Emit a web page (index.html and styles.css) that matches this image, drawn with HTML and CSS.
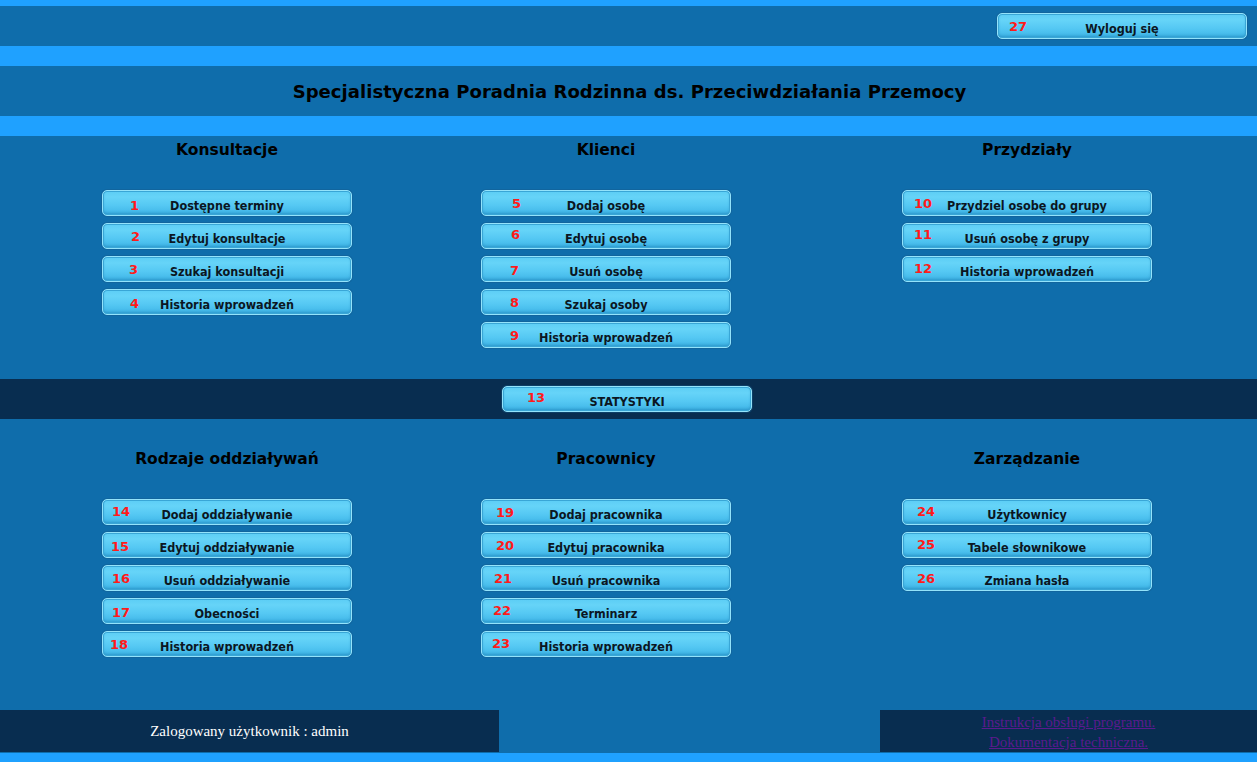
FILE: index.html
```html
<!DOCTYPE html>
<html lang="pl">
<head>
<meta charset="utf-8">
<title>Specjalistyczna Poradnia Rodzinna</title>
<link rel="stylesheet" href="styles.css">
</head>
<body>
<div class="stripe top"></div>
<div class="bar header">
  <a class="btn logout" href="#"><span class="n l12 t7">27</span>Wyloguj się</a>
</div>
<div class="stripe"></div>
<div class="bar title"><h1>Specjalistyczna Poradnia Rodzinna ds. Przeciwdziałania Przemocy</h1></div>
<div class="stripe"></div>

<div class="section s1">
  <div class="col">
    <h2>Konsultacje</h2>
    <div class="list">
      <a class="btn" href="#"><span class="n l28 t9">1</span>Dostępne terminy</a>
      <a class="btn" href="#"><span class="n l29 t7">2</span>Edytuj konsultacje</a>
      <a class="btn" href="#"><span class="n l27 t7">3</span>Szukaj konsultacji</a>
      <a class="btn" href="#"><span class="n l28 t8">4</span>Historia wprowadzeń</a>
    </div>
  </div>
  <div class="col c2">
    <h2>Klienci</h2>
    <div class="list">
      <a class="btn" href="#"><span class="n l31 t7">5</span>Dodaj osobę</a>
      <a class="btn" href="#"><span class="n l30 t5">6</span>Edytuj osobę</a>
      <a class="btn" href="#"><span class="n l29 t8">7</span>Usuń osobę</a>
      <a class="btn" href="#"><span class="n l29 t7">8</span>Szukaj osoby</a>
      <a class="btn" href="#"><span class="n l29 t7">9</span>Historia wprowadzeń</a>
    </div>
  </div>
  <div class="col c3">
    <h2>Przydziały</h2>
    <div class="list">
      <a class="btn" href="#"><span class="n l12 t7">10</span>Przydziel osobę do grupy</a>
      <a class="btn" href="#"><span class="n l12 t5">11</span>Usuń osobę z grupy</a>
      <a class="btn" href="#"><span class="n l12 t6">12</span>Historia wprowadzeń</a>
    </div>
  </div>
</div>

<div class="bar stats">
  <a class="btn" href="#"><span class="n l25 t5">13</span>STATYSTYKI</a>
</div>

<div class="section s2">
  <div class="col">
    <h2>Rodzaje oddziaływań</h2>
    <div class="list">
      <a class="btn" href="#"><span class="n l10 t6">14</span>Dodaj oddziaływanie</a>
      <a class="btn" href="#"><span class="n l9 t8">15</span>Edytuj oddziaływanie</a>
      <a class="btn" href="#"><span class="n l10 t7">16</span>Usuń oddziaływanie</a>
      <a class="btn" href="#"><span class="n l10 t8">17</span>Obecności</a>
      <a class="btn" href="#"><span class="n l8 t7">18</span>Historia wprowadzeń</a>
    </div>
  </div>
  <div class="col c2">
    <h2>Pracownicy</h2>
    <div class="list">
      <a class="btn" href="#"><span class="n l15 t7">19</span>Dodaj pracownika</a>
      <a class="btn" href="#"><span class="n l15 t7">20</span>Edytuj pracownika</a>
      <a class="btn" href="#"><span class="n l13 t7">21</span>Usuń pracownika</a>
      <a class="btn" href="#"><span class="n l12 t6">22</span>Terminarz</a>
      <a class="btn" href="#"><span class="n l11 t6">23</span>Historia wprowadzeń</a>
    </div>
  </div>
  <div class="col c3">
    <h2>Zarządzanie</h2>
    <div class="list">
      <a class="btn" href="#"><span class="n l15 t6">24</span>Użytkownicy</a>
      <a class="btn" href="#"><span class="n l15 t6">25</span>Tabele słownikowe</a>
      <a class="btn" href="#"><span class="n l15 t7">26</span>Zmiana hasła</a>
    </div>
  </div>
</div>

<div class="footer">
  <div class="fbox left">Zalogowany użytkownik : admin</div>
  <div class="fbox right">
    <a href="#">Instrukcja obsługi programu.</a>
    <a href="#">Dokumentacja techniczna.</a>
  </div>
</div>
<div class="stripe bottom"></div>
</body>
</html>
```
FILE: styles.css
```css
html, body {
  margin: 0;
  padding: 0;
}
body {
  background: #0f6dab;
  font-family: "DejaVu Sans", Verdana, sans-serif;
  color: #000;
  width: 1257px;
  height: 762px;
  overflow: hidden;
}
.stripe {
  height: 20px;
  background: #1fa1ff;
}
.stripe.top { height: 6px; }
.stripe.bottom { height: 9px; border-top: 1px solid #0f6dab; }

.bar { background: #0f6dab; }
.header {
  height: 40px;
  display: flex;
  justify-content: flex-end;
  align-items: flex-start;
  padding: 7px 10px 0 0;
  box-sizing: border-box;
}
.title {
  height: 50px;
  display: flex;
  align-items: center;
  justify-content: center;
}
.title h1 {
  margin: 0;
  font-size: 18px;
  font-weight: bold;
  letter-spacing: 0.05px;
  transform: translateX(1px);
}

.section {
  display: flex;
  padding-left: 102px;
  box-sizing: border-box;
}
.s1 { height: 243px; padding-top: 4px; }
.s2 { height: 291px; padding-top: 30px; }
.col { width: 250px; }
.col.c2 { margin-left: 129px; }
.col.c3 { margin-left: 171px; }
.col h2 {
  margin: 0 0 30px;
  font-size: 15.5px;
  line-height: 20px;
  text-align: center;
  font-weight: bold;
  white-space: nowrap;
}
.list {
  display: flex;
  flex-direction: column;
  gap: 7px;
}

.stats {
  height: 40px;
  background: #082d50;
  display: flex;
  padding: 7px 0 0 502px;
  box-sizing: border-box;
}

.btn {
  position: relative;
  display: block;
  width: 250px;
  height: 26px;
  box-sizing: border-box;
  border: 1px solid #93e3fb;
  border-radius: 5px;
  padding-top: 4px;
  line-height: 22px;
  text-align: center;
  text-decoration: none;
  color: #0b1622;
  font-family: "DejaVu Sans Condensed", "DejaVu Sans", sans-serif;
  font-weight: bold;
  font-size: 12.5px;
  background: linear-gradient(to bottom, #5ccdf5 0%, #66d4f8 25%, #55c8f3 60%, #3db4e6 100%);
  box-shadow: inset 0 0 0 1px #39a6d6, inset 0 -2px 3px rgba(10, 90, 150, 0.35), 0 0 0 1px rgba(20, 90, 140, 0.4);
}
.n {
  position: absolute;
  color: #ff1a1a;
  font-family: "DejaVu Sans", sans-serif;
  font-weight: bold;
  font-size: 13px;
  line-height: 13px;
}
.l8 { left: 7px; } .l9 { left: 8px; } .l10 { left: 9px; } .l11 { left: 10px; }
.l12 { left: 11px; } .l13 { left: 12px; } .l15 { left: 14px; }
.l25 { left: 24px; } .l27 { left: 26px; } .l28 { left: 27px; } .l29 { left: 28px; }
.l30 { left: 29px; } .l31 { left: 30px; }
.t5 { top: 4px; } .t6 { top: 5px; } .t7 { top: 6px; } .t8 { top: 7px; } .t9 { top: 8px; }

.footer {
  display: flex;
  justify-content: space-between;
  height: 42px;
  background: #0f6dab;
}
.fbox {
  background: #082d50;
  font-family: "Liberation Serif", "Times New Roman", serif;
  font-size: 15px;
  text-align: center;
}
.fbox.left {
  width: 499px;
  color: #fff;
  line-height: 42px;
}
.fbox.right {
  width: 377px;
  display: flex;
  flex-direction: column;
  align-items: center;
  padding-top: 2px;
  box-sizing: border-box;
}
.fbox.right a {
  color: #5a1a8e;
  line-height: 20px;
}
```
